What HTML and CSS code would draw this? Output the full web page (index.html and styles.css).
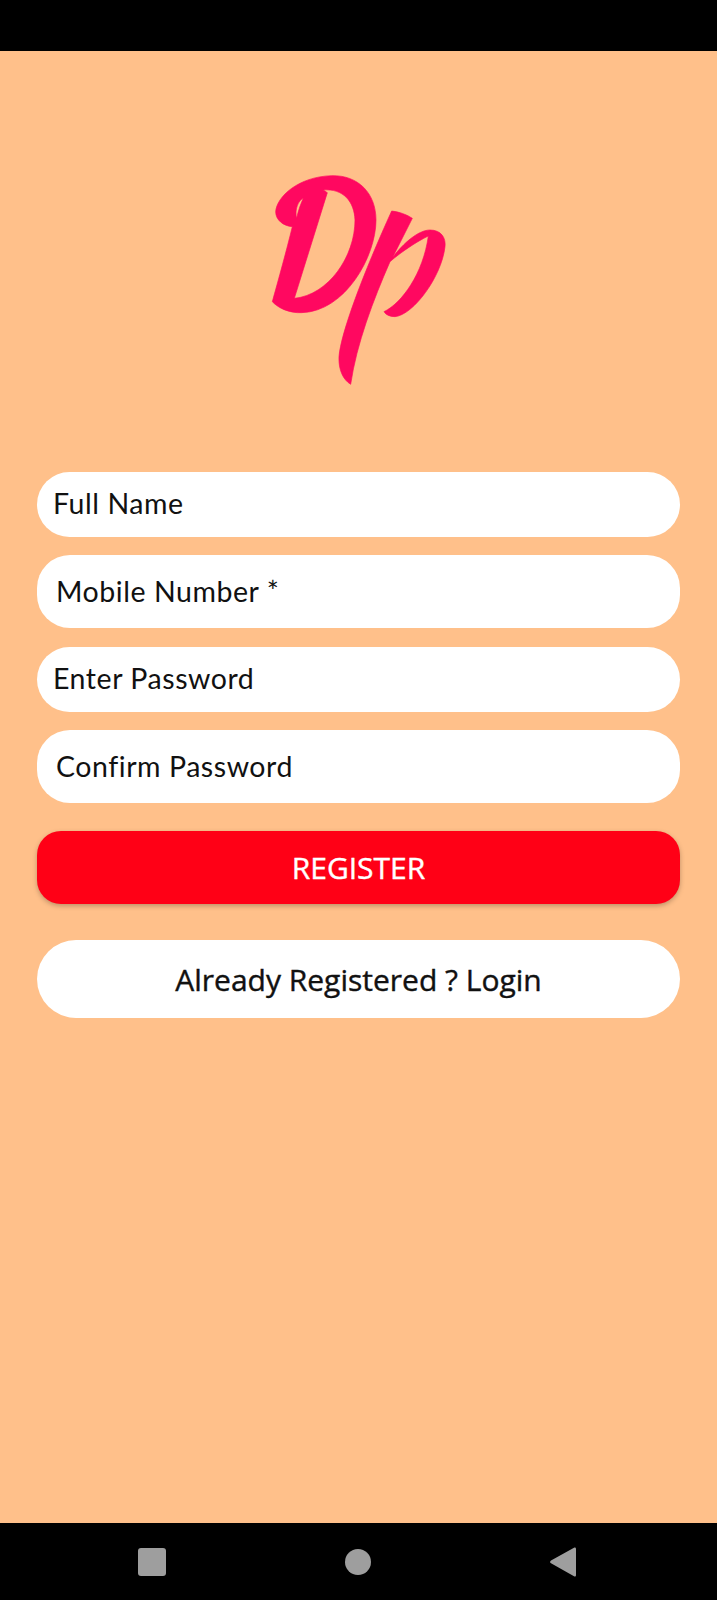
FILE: index.html
```html
<!doctype html>
<html>

<head>
    <title>Register</title>
    <link rel="stylesheet" href="styles.css">
</head>

<body>
    <div class="status-bar"></div>

    <div class="container">
        <div class="logo">
            <svg width="240" height="250" viewBox="0 0 240 250">
                <path transform="translate(25 20) scale(0.3333)" fill-rule="evenodd" d="M22 395 C40 330 65 240 82 170 C55 168 32 150 32 125 C35 80 100 20 200 17 C280 15 333 70 333 150 C333 260 240 425 110 428 C75 430 40 415 22 395 Z M175 60 L187 68 L88 385 C190 375 270 260 270 150 C268 95 235 55 175 60 Z M115 85 C100 90 88 120 95 145 C100 120 108 100 115 85 Z" />
                <path transform="translate(90 50) scale(0.3333)" d="M185 33 C205 35 230 43 247 55 L188 172 C220 130 265 90 300 90 C335 90 348 115 345 140 C335 230 250 345 195 350 C180 350 168 345 162 335 C215 310 280 220 295 108 C260 125 215 155 180 185 C130 300 80 430 62 553 C40 540 25 510 27 470 C32 400 100 220 185 33 Z" />
            </svg>
        </div>

        <div class="field">Full Name</div>
        <div class="field field-tall">Mobile Number *</div>
        <div class="field">Enter Password</div>
        <div class="field field-tall">Confirm Password</div>

        <button class="register-btn" type="button">REGISTER</button>
        <button class="login-btn" type="button">Already Registered ? Login</button>
    </div>

    <div class="nav-bar">
        <svg width="28" height="28" viewBox="0 0 28 28"><rect width="28" height="28" rx="3" /></svg>
        <svg width="26" height="26" viewBox="0 0 26 26"><circle cx="13" cy="13" r="13" /></svg>
        <svg width="26" height="30" viewBox="0 0 26 30"><path d="M26 2 C26 0.5 25 0 24 0.7 L1 13.5 C-0.2 14.3 -0.2 15.5 1 16.2 L24 29.3 C25 30 26 29.5 26 28 Z" /></svg>
    </div>
</body>

</html>
```

FILE: styles.css
```css
body {
    margin: 0;
    height: 1600px;
    display: flex;
    flex-direction: column;
    background-color: #ffc08a;
    font-family: Lato, sans-serif;
    color: #111;
}

.status-bar {
    height: 51px;
    background-color: #000;
}

.container {
    flex: 1;
    padding: 0 37px;
}

.logo {
    padding: 99px 0 0 3px;
    margin-bottom: 72px;
    display: flex;
    justify-content: center;
}

.logo svg {
    fill: #ff0860;
    stroke: #ff0860;
    stroke-width: 2px;
}

.field {
    height: 65px;
    margin-bottom: 18px;
    padding: 0 0 4px 16px;
    display: flex;
    align-items: center;
    box-sizing: border-box;
    background-color: white;
    border-radius: 33px;
    font-size: 28.5px;
    letter-spacing: 0.55px;
}

.field-tall {
    height: 73px;
    margin-bottom: 19px;
    padding: 0 0 2px 19px;
}

.register-btn,
.login-btn {
    display: block;
    width: 100%;
    border: none;
    font-family: "Open Sans", sans-serif;
    font-size: 30px;
    -webkit-text-stroke: 0.4px currentColor;
}

.register-btn {
    height: 73px;
    margin-top: 28px;
    margin-bottom: 36px;
    background-color: #ff0016;
    color: white;
    border-radius: 24px;
    box-shadow: 0 2px 5px rgba(0, 0, 0, 0.25);
}

.login-btn {
    height: 78px;
    background-color: white;
    color: #111;
    border-radius: 39px;
}

.nav-bar {
    height: 77px;
    padding: 0 141px 0 138px;
    display: flex;
    justify-content: space-between;
    align-items: center;
    background-color: #000;
}

.nav-bar svg {
    fill: #9e9e9e;
}
```
